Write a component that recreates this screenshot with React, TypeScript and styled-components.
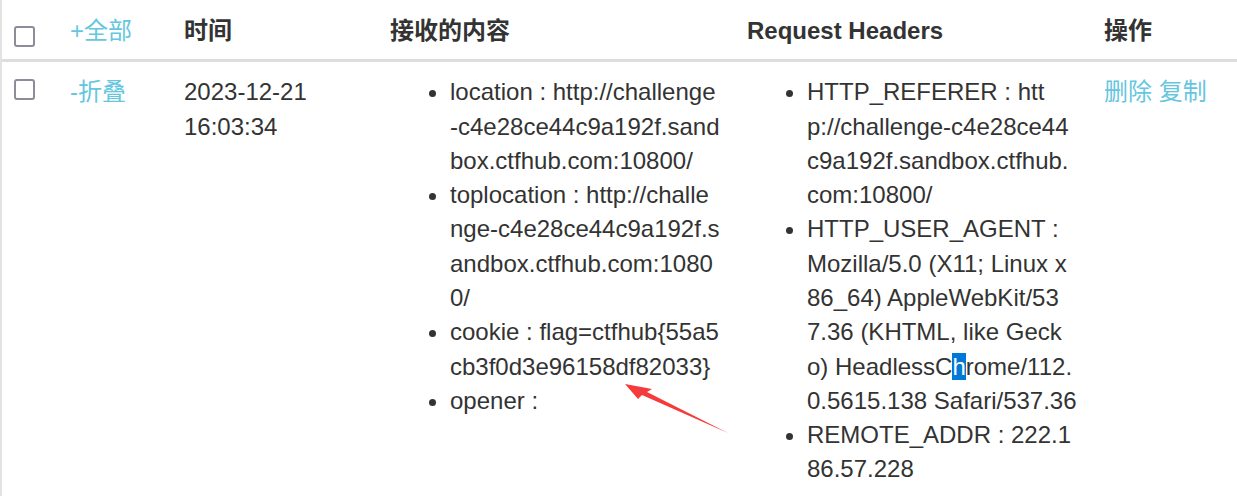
import React from "react";
import styled, { createGlobalStyle } from "styled-components";

const GlobalStyle = createGlobalStyle`
  html, body {
    margin: 0;
    padding: 0;
    overflow: hidden;
    background: #ffffff;
  }
  body {
    font-family: "Liberation Sans", Arial, "Noto Sans CJK SC", sans-serif;
    color: #333333;
  }
`;

const Page = styled.div`
  position: relative;
  width: 1237px;
  height: 496px;
  overflow: hidden;
  background: #ffffff;
`;

const Table = styled.div`
  display: grid;
  grid-template-columns: 54px 114px 206px 357px 357px 1fr;
  border-left: 2px solid #e2e2e2;
  font-size: 24px;
  line-height: 1.42857;
  color: #333333;
`;

const HeadCell = styled.div`
  padding: 14px 14px 11px 14px;
  font-weight: bold;
  border-bottom: 3px solid #dddddd;
  white-space: nowrap;
`;

const BodyCell = styled.div`
  padding: 13px 14px 13px 14px;
`;

const CheckCell = styled.div<{ $head?: boolean }>`
  padding: ${(p) => (p.$head ? "14px 0 11px 12px" : "13px 0 13px 12px")};
  border-bottom: ${(p) => (p.$head ? "3px solid #dddddd" : "none")};
`;

const Checkbox = styled.span<{ $offset: number }>`
  display: block;
  box-sizing: border-box;
  width: 21px;
  height: 21px;
  margin-top: ${(p) => p.$offset}px;
  border: 2.5px solid #8d8c9a;
  border-radius: 3px;
  background: #ffffff;
`;

const Link = styled.a`
  color: #66c6e0;
  font-weight: normal;
  text-decoration: none;
  cursor: pointer;
`;

const List = styled.ul`
  margin: 0;
  padding-left: 60px;
  list-style: disc;
`;

const Item = styled.li`
  white-space: nowrap;
`;

const Line = styled.span`
  display: block;
`;

const Selected = styled.span`
  background: #0078d7;
  color: #ffffff;
`;

const Arrow = styled.svg`
  position: absolute;
  left: 0;
  top: 0;
  pointer-events: none;
`;

type Entry = React.ReactNode[];

const contentItems: Entry[] = [
  ["location : http://challenge", "-c4e28ce44c9a192f.sand", "box.ctfhub.com:10800/"],
  ["toplocation : http://challe", "nge-c4e28ce44c9a192f.s", "andbox.ctfhub.com:1080", "0/"],
  ["cookie : flag=ctfhub{55a5", "cb3f0d3e96158df82033}"],
  ["opener : "],
];

const headerItems: Entry[] = [
  ["HTTP_REFERER : htt", "p://challenge-c4e28ce44", "c9a192f.sandbox.ctfhub.", "com:10800/"],
  [
    "HTTP_USER_AGENT :",
    "Mozilla/5.0 (X11; Linux x",
    "86_64) AppleWebKit/53",
    "7.36 (KHTML, like Geck",
    <>
      o) HeadlessC<Selected>h</Selected>rome/112.
    </>,
    "0.5615.138 Safari/537.36",
  ],
  ["REMOTE_ADDR : 222.1", "86.57.228"],
];

function Bullets({ items }: { items: Entry[] }) {
  return (
    <List>
      {items.map((lines, i) => (
        <Item key={i}>
          {lines.map((l, j) => (
            <Line key={j}>{l}</Line>
          ))}
        </Item>
      ))}
    </List>
  );
}

export default function App() {
  return (
    <>
      <GlobalStyle />
      <Page>
        <Table>
          <CheckCell $head>
            <Checkbox $offset={12} />
          </CheckCell>
          <HeadCell>
            <Link>+全部</Link>
          </HeadCell>
          <HeadCell>时间</HeadCell>
          <HeadCell>接收的内容</HeadCell>
          <HeadCell>Request Headers</HeadCell>
          <HeadCell>操作</HeadCell>

          <CheckCell>
            <Checkbox $offset={4} />
          </CheckCell>
          <BodyCell>
            <Link>-折叠</Link>
          </BodyCell>
          <BodyCell>2023-12-21 16:03:34</BodyCell>
          <BodyCell>
            <Bullets items={contentItems} />
          </BodyCell>
          <BodyCell>
            <Bullets items={headerItems} />
          </BodyCell>
          <BodyCell>
            <Link>删除</Link> <Link>复制</Link>
          </BodyCell>
        </Table>
        <Arrow width="1237" height="496" viewBox="0 0 1237 496">
          <polygon
            points="625,384 652,389 647,392 728,433 642,395 638,399"
            fill="#f53b3b"
          />
        </Arrow>
      </Page>
    </>
  );
}
